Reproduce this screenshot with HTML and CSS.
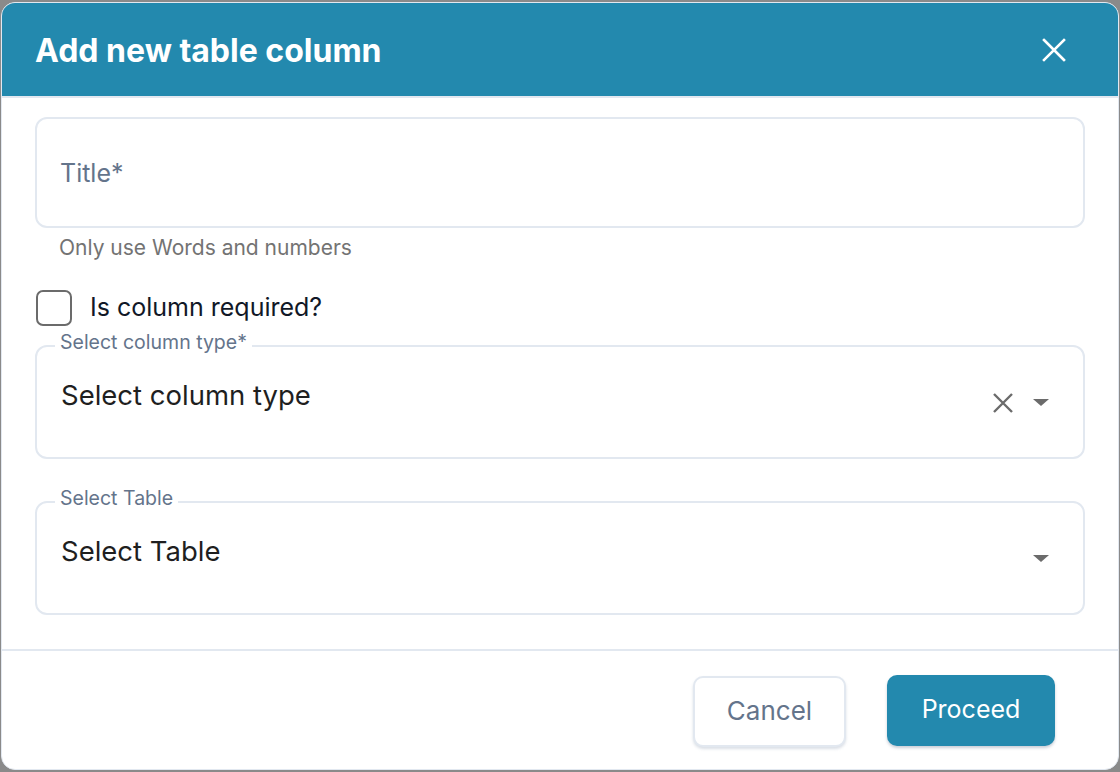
FILE: index.html
```html
<!DOCTYPE html>
<html>
<head>
<meta charset="utf-8">
<link rel="stylesheet" href="styles.css">
</head>
<body>
<div class="dialog">
  <div class="header">
    <h1 class="title">Add new table column</h1>
    <button class="close" aria-label="Close">
      <svg width="24" height="24" viewBox="0 0 24 24"><path d="M2 2 L22 22 M22 2 L2 22" stroke="#fff" stroke-width="2.6" stroke-linecap="square" fill="none"/></svg>
    </button>
  </div>
  <div class="body">
    <div class="input-box">
      <span class="placeholder">Title*</span>
    </div>
    <div class="helper">Only use Words and numbers</div>
    <label class="check-row">
      <span class="checkbox"></span>
      <span class="check-label">Is column required?</span>
    </label>
    <div class="select-box first">
      <span class="float-label">Select column type*</span>
      <div class="select-row">
        <span class="select-value">Select column type</span>
        <div class="select-icons">
          <svg class="clear" width="22" height="22" viewBox="0 0 22 22"><path d="M2 2 L20 20 M20 2 L2 20" stroke="#6b6b6b" stroke-width="2.4" fill="none"/></svg>
          <svg class="arrow" width="16" height="8" viewBox="0 0 16 8"><path d="M0 0 L16 0 L8 7 Z" fill="#6b6b6b"/></svg>
        </div>
      </div>
    </div>
    <div class="select-box second">
      <span class="float-label">Select Table</span>
      <div class="select-row">
        <span class="select-value">Select Table</span>
        <div class="select-icons">
          <svg class="arrow" width="16" height="8" viewBox="0 0 16 8"><path d="M0 0 L16 0 L8 7 Z" fill="#6b6b6b"/></svg>
        </div>
      </div>
    </div>
  </div>
  <div class="footer">
    <button class="btn btn-cancel">Cancel</button>
    <button class="btn btn-proceed">Proceed</button>
  </div>
</div>
</body>
</html>
```
FILE: styles.css
```css
* { box-sizing: border-box; }
html, body {
  margin: 0;
  padding: 0;
  background: #8a8a8a;
  font-family: Inter, "Noto Sans", "Liberation Sans", sans-serif;
}
.dialog {
  margin: 2px 1px 2px 1px;
  height: 768px;
  background: #fff;
  border: 1px solid #e2e8f0;
  border-radius: 14px;
  overflow: hidden;
  display: flex;
  flex-direction: column;
}
.header {
  height: 95px;
  background: #2389ae;
  border-bottom: 2px solid #e2e8f0;
  display: flex;
  align-items: center;
  justify-content: space-between;
  padding: 0 52px 0 33px;
  flex-shrink: 0;
}
.title {
  margin: 0;
  color: #fff;
  font-size: 32px;
  font-weight: 700;
  letter-spacing: 0;
  margin-top: 1px;
}
.close {
  background: none;
  border: 0;
  padding: 0;
  width: 24px;
  height: 24px;
  display: flex;
  margin-top: 0;
}
.body {
  padding: 19px 33px 0 33px;
  display: flex;
  flex-direction: column;
  flex: 1;
}
.input-box {
  height: 111px;
  border: 2px solid #e2e8f0;
  border-radius: 12px;
  display: flex;
  align-items: center;
  padding: 0 23px;
}
.placeholder {
  font-size: 25px;
  color: #64748b;
  line-height: 30px;
}
.helper {
  margin-top: 7px;
  padding-left: 24px;
  font-size: 21px;
  line-height: 26px;
  color: #737373;
}
.check-row {
  margin-top: 29px;
  display: flex;
  align-items: center;
  gap: 18px;
}
.checkbox {
  width: 36px;
  height: 36px;
  border: 2px solid #6b6b6b;
  border-radius: 7px;
  margin-left: 1px;
}
.check-label {
  font-size: 25px;
  line-height: 30px;
  margin-top: -2px;
  color: #111827;
}
.select-box {
  position: relative;
  border: 2px solid #e2e8f0;
  border-radius: 12px;
  padding: 31px 34px 0 24px;
}
.select-box.first {
  margin-top: 19px;
  height: 114px;
}
.select-box.second {
  margin-top: 42px;
  height: 114px;
}
.float-label {
  position: absolute;
  top: -16px;
  left: 18px;
  padding: 0 5px;
  background: #fff;
  font-size: 19.5px;
  line-height: 22px;
  color: #64748b;
}
.select-row {
  display: flex;
  align-items: flex-start;
  justify-content: space-between;
}
.select-value {
  font-size: 27.5px;
  line-height: 34px;
  color: #1f1f1f;
}
.select-icons {
  display: flex;
  align-items: center;
  gap: 19px;
  margin-top: 14px;
  height: 22px;
}
.footer {
  border-top: 2px solid #e2e8f0;
  margin-top: 34px;
  padding: 24px 63px 0 0;
  height: 122px;
  display: flex;
  justify-content: flex-end;
  align-items: flex-start;
  gap: 41px;
  flex-shrink: 0;
}
.btn {
  height: 71px;
  border-radius: 10px;
  font-family: inherit;
  font-size: 25px;
  padding-bottom: 4px;
  cursor: pointer;
}
.btn-cancel {
  width: 153px;
  background: #fff;
  border: 2px solid #e2e8f0;
  color: #64748b;
  margin-top: 1px;
  font-size: 26px;
  box-shadow: 0 2px 3px rgba(148, 163, 184, 0.35);
}
.btn-proceed {
  width: 168px;
  background: #2389ae;
  border: 0;
  color: #fff;
  box-shadow: 0 2px 3px rgba(100, 116, 139, 0.35);
}
```
